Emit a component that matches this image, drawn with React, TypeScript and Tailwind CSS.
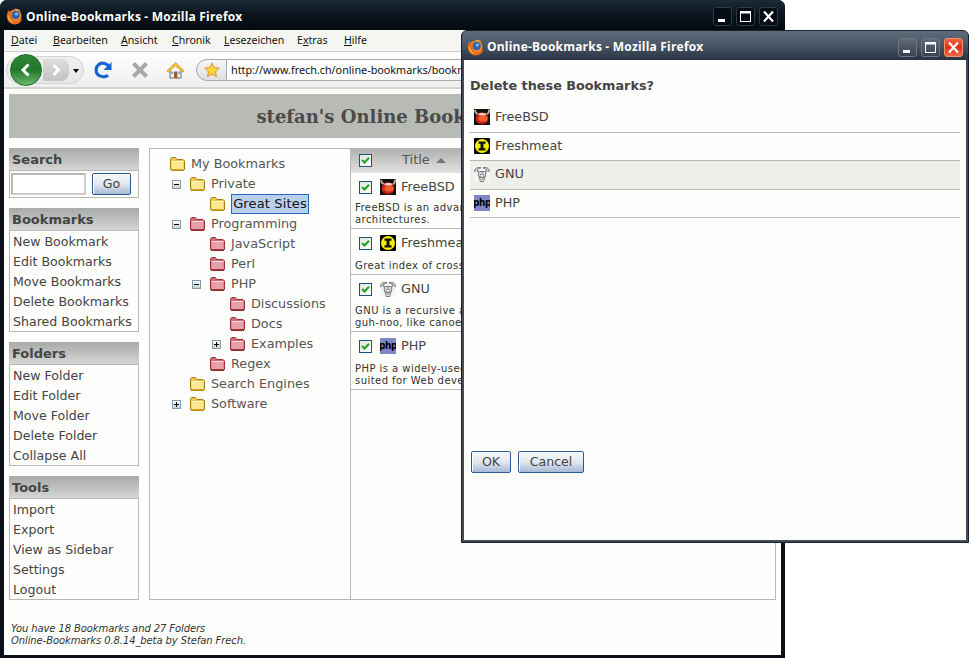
import React from "react";

const vera = { fontFamily: '"DejaVu Sans", sans-serif' };

function Firefox() {
  return (
    <svg width="17" height="17" viewBox="0 0 17 17" className="shrink-0">
      <circle cx="9" cy="8" r="6.6" fill="#f08a1c" />
      <circle cx="9.6" cy="7" r="4.2" fill="#2a62b0" />
      <circle cx="10.4" cy="6" r="1.8" fill="#7db2e2" />
      <path d="M2.6 1.8C1.6 4 .8 6 .8 8.6c0 4.4 3.6 7.8 8 7.8 3.8 0 7-2.6 7.6-6.2-1.2 2-3.2 3.2-5.6 3.2-3 0-5.2-1.8-5.2-4.4 0-1 .5-1.9 1.4-2.4-.8-.8-2-.8-2.8-.2-.2-1.6-.8-3-1.6-4.6z" fill="#e8651a" />
      <path d="M3.2 6.5c-.7 3.2 1.5 7.4 5.8 8.4-3.2.5-6.6-2.2-6.8-5.6 0-1 .4-2 1-2.8z" fill="#f9c544" />
      <path d="M8.2 1c2.4-.6 5.4.4 6.8 2.6-1.8-1.2-3.6-1.4-5-1z" fill="#f6b030" />
    </svg>
  );
}

function WinButton({ kind, variant }: { kind: "min" | "max" | "close"; variant: "dark" | "gray" | "red" }) {
  const cls =
    variant === "dark"
      ? "border-[#2c3a4c] bg-[#050b14]"
      : variant === "gray"
      ? "border-[#6d7680] bg-gradient-to-b from-[#626c78] to-[#38424f]"
      : "border-[#f09070] bg-gradient-to-b from-[#f0603c] via-[#e82c10] to-[#f06a48]";
  return (
    <div className={`w-[19px] h-[19px] rounded-[3px] border flex items-center justify-center ${cls}`}>
      <svg width="15" height="15" viewBox="0 0 15 15">
        {kind === "min" && <rect x="3" y="10" width="7" height="3" fill="#fff" />}
        {kind === "max" && (
          <g fill="none" stroke="#fff">
            <rect x="2.5" y="2.5" width="10" height="10" />
            <path d="M2 3.5h11" strokeWidth="2" />
          </g>
        )}
        {kind === "close" && <path d="M3 2.5l9 10M12 2.5l-9 10" stroke="#fff" strokeWidth="2.2" fill="none" />}
      </svg>
    </div>
  );
}

function Folder({ color }: { color: "yellow" | "red" }) {
  const c =
    color === "yellow"
      ? { s: "#a87c10", f: "#fde793", b: "#f1c548", t: "#fff6c8", d: "#c8920e" }
      : { s: "#9c3034", f: "#e8a0a8", b: "#d06a74", t: "#f9dcde", d: "#8e2428" };
  return (
    <svg width="17" height="16" viewBox="0 0 17 16" className="shrink-0">
      <path d="M1.5 4.5V3l1.2-1.5h3.6L8 3.5h6l1.5 1.5v8.5l-1 1h-12l-1-1z" fill={c.b} stroke={c.s} strokeLinejoin="round" />
      <path d="M2.5 6h12v7.5h-12z" fill={c.f} />
      <path d="M2.5 5.5h12" stroke={c.t} />
      <path d="M2 14h13" stroke={c.d} strokeWidth="1.6" />
    </svg>
  );
}

function Expander({ open }: { open: boolean }) {
  return (
    <span className="w-[9px] h-[9px] border border-[#7e9db9] bg-gradient-to-b from-white to-[#d0d0c4] flex items-center justify-center">
      <svg width="7" height="7" viewBox="0 0 7 7">
        <path d={open ? "M1 3.5h5" : "M1 3.5h5M3.5 1v5"} stroke="#000" fill="none" />
      </svg>
    </span>
  );
}

function Check() {
  return (
    <span className="w-[13px] h-[13px] border border-[#1c5180] bg-gradient-to-br from-[#e4e4dc] to-white flex items-center justify-center shrink-0">
      <svg width="11" height="11" viewBox="0 0 11 11">
        <path d="M2 5l2.5 2.5L9 2.8" stroke="#21a121" strokeWidth="2" fill="none" />
      </svg>
    </span>
  );
}

function FreeBsd() {
  return (
    <svg width="16" height="16" viewBox="0 0 16 16" className="shrink-0">
      <rect width="16" height="16" fill="#111" />
      <path d="M1 1c.3 2.4 1.2 3.6 2.8 4.2M15 .5c.2 2.6-.6 4-2.2 4.6" stroke="#d9a8a0" strokeWidth="1.8" fill="none" />
      <circle cx="8" cy="9.4" r="6.2" fill="#d0281c" />
      <ellipse cx="9" cy="9.4" rx="4.4" ry="3" fill="#f0602a" />
      <ellipse cx="8.4" cy="5.2" rx="4" ry="1.2" fill="#f6d0c8" />
      <path d="M4 13.5c2 1.6 6 1.6 8 0" stroke="#901410" fill="none" />
    </svg>
  );
}

function Freshmeat() {
  return (
    <svg width="16" height="16" viewBox="0 0 16 16" className="shrink-0">
      <rect width="16" height="16" rx="1" fill="#000" />
      <circle cx="8" cy="8" r="7" fill="#f6f000" />
      <path d="M4.5 3.5h7v2.2h-2v4.6h2v2.2h-7v-2.2h2V5.7h-2z" fill="#111" />
    </svg>
  );
}

function Gnu() {
  return (
    <svg width="16" height="16" viewBox="0 0 16 16" className="shrink-0">
      <rect width="16" height="16" fill="#f4f4f2" />
      <path d="M.8 6C.2 2.4 3.6.8 7 1.8 5 2.4 3.4 3 3.4 5L6 6.4M15.2 6c.6-3.6-2.8-5.2-6.2-4.2 2 .6 3.6 1.2 3.6 3.2L10 6.4" stroke="#6c6c6c" fill="#cfcfcf" strokeWidth="1" />
      <path d="M4.2 6.5c1-1.4 6.6-1.4 7.6 0 .2 3.2-1.6 6.4-2.2 9H6.4c-.6-2.6-2.4-5.8-2.2-9z" fill="#f2f2f2" stroke="#777" />
      <path d="M5.6 8l1.4 1M10.4 8L9 9M6 11l4 .4M6.6 13h2.8M8 6v3M6 9.6v2M10 9.6v2" stroke="#666" fill="none" />
    </svg>
  );
}

function Php() {
  return (
    <span
      className="w-[16px] h-[16px] bg-[#8286c2] flex items-center justify-center shrink-0 text-[10px] font-bold text-black leading-none overflow-hidden tracking-[-0.5px]"
      style={{ fontFamily: '"DejaVu Sans Condensed", "Liberation Sans", sans-serif' }}
    >
      php
    </span>
  );
}

const icons = { freebsd: FreeBsd, freshmeat: Freshmeat, gnu: Gnu, php: Php };

function SidePanel({ title, items }: { title: string; items: string[] }) {
  return (
    <div className="flex flex-col">
      <div className="h-[22px] pl-[3px] pt-[1px] bg-gradient-to-b from-[#a8aaa7] to-[#d6d7d4] text-[13px] font-bold text-[#444] leading-[22px]">{title}</div>
      <div className="border border-[#b8b8b6] flex flex-col pl-[2px] pt-[1px] h-[102px] text-[#444] text-[12.6px]">
        {items.map((t) => (
          <div key={t} className="h-[20px] leading-[20px] pl-[1px]">{t}</div>
        ))}
      </div>
    </div>
  );
}

type Node = { t: string; lvl: 0 | 1 | 2 | 3; c: "yellow" | "red"; exp?: "open" | "closed"; sel?: boolean };
const tree: Node[] = [
  { t: "My Bookmarks", lvl: 0, c: "yellow" },
  { t: "Private", lvl: 1, c: "yellow", exp: "open" },
  { t: "Great Sites", lvl: 2, c: "yellow", sel: true },
  { t: "Programming", lvl: 1, c: "red", exp: "open" },
  { t: "JavaScript", lvl: 2, c: "red" },
  { t: "Perl", lvl: 2, c: "red" },
  { t: "PHP", lvl: 2, c: "red", exp: "open" },
  { t: "Discussions", lvl: 3, c: "red" },
  { t: "Docs", lvl: 3, c: "red" },
  { t: "Examples", lvl: 3, c: "red", exp: "closed" },
  { t: "Regex", lvl: 2, c: "red" },
  { t: "Search Engines", lvl: 1, c: "yellow" },
  { t: "Software", lvl: 1, c: "yellow", exp: "closed" },
];
const indent = { 0: "pl-[19px]", 1: "pl-[22px]", 2: "pl-[42px]", 3: "pl-[62px]" };

function TreeRow({ n }: { n: Node }) {
  return (
    <div className={`h-[20px] flex items-center ${indent[n.lvl]}`}>
      {n.lvl > 0 && (
        <span className="w-[17px] flex items-center shrink-0">{n.exp && <Expander open={n.exp === "open"} />}</span>
      )}
      <Folder color={n.c} />
      {n.sel ? (
        <span className="ml-[5px] h-[20px] w-[78px] text-center border border-[#2f63c8] bg-[#b9cfee] text-[#111] leading-[18px] text-[13px] tracking-[0.15px]">{n.t}</span>
      ) : (
        <span className="ml-[5px] text-[#555]">{n.t}</span>
      )}
    </div>
  );
}

const bookmarks = [
  { id: "freebsd" as const, t: "FreeBSD", h: "h-[56px]", dm: "mt-[3px]", d: ["FreeBSD is an advanced operating system for x86 compatible", "architectures."] },
  { id: "freshmeat" as const, t: "Freshmeat", h: "h-[46px]", dm: "mt-[5px]", d: ["Great index of cross-platform software"] },
  { id: "gnu" as const, t: "GNU", h: "h-[57px]", dm: "mt-[4px]", d: ["GNU is a recursive acronym for GNU's Not Unix; pronounced", "guh-noo, like canoe."] },
  { id: "php" as const, t: "PHP", h: "h-[58px]", dm: "mt-[5px]", d: ["PHP is a widely-used general-purpose scripting language", "suited for Web development."] },
];

function BmRow({ b }: { b: (typeof bookmarks)[number] }) {
  const I = icons[b.id];
  return (
    <div className={`${b.h} border-b border-[#b8b8b6] overflow-hidden`}>
      <div className="h-[24px] mt-[2px] flex items-center pl-[8px]">
        <Check />
        <span className="ml-[8px]"><I /></span>
        <span className="ml-[5px] text-[12.8px] text-[#444]">{b.t}</span>
      </div>
      <div className={`${b.dm} pl-[4px] text-[10px] leading-[12px] tracking-[0.45px] text-[#333] whitespace-nowrap`}>
        {b.d.map((l) => (
          <div key={l}>{l}</div>
        ))}
      </div>
    </div>
  );
}

function Btn({ label, w }: { label: string; w: string }) {
  return (
    <button
      className={`${w} h-[22px] pt-[1px] rounded-[2px] border border-[#2f5a96] bg-gradient-to-b from-[#f8f9fb] via-[#e2e8f0] to-[#a6b9d6] text-[12.6px] text-[#444] shadow-[inset_1px_1px_0_#fff]`}
      style={vera}
    >
      {label}
    </button>
  );
}

function Menu() {
  const u = "underline underline-offset-1";
  return (
    <div className="h-[21px] bg-[#f5f5f1] flex items-center pl-[7px] text-[10.6px] text-[#111]" style={{ fontFamily: '"Noto Sans", sans-serif' }}>
      <span className="w-[42px]"><span className={u}>D</span>atei</span>
      <span className="w-[68px]"><span className={u}>B</span>earbeiten</span>
      <span className="w-[51px]"><span className={u}>A</span>nsicht</span>
      <span className="w-[52px]"><span className={u}>C</span>hronik</span>
      <span className="w-[73px]"><span className={u}>L</span>esezeichen</span>
      <span className="w-[47px]">E<span className={u}>x</span>tras</span>
      <span><span className={u}>H</span>ilfe</span>
    </div>
  );
}

function Toolbar() {
  return (
    <div className="h-[38px] bg-gradient-to-b from-white to-[#eeeeee] border-t border-[#d0d0cc] border-b-2 border-b-[#d4d4d0] flex items-center pl-[2px] overflow-hidden">
      <div className="relative w-[78px] h-[28px] rounded-full border border-[#d0d2d4] bg-gradient-to-b from-[#eceef0] to-[#e6e8ea] shrink-0">
        <div className="absolute left-[36px] top-[2px] w-[26px] h-[22px] rounded-r-[8px] bg-gradient-to-b from-[#dcdcdc] to-[#c4c4c4] flex items-center justify-center">
          <svg width="12" height="14" viewBox="0 0 12 14"><path d="M3.5 2l5 5-5 5" stroke="#fff" strokeWidth="3" fill="none" /></svg>
        </div>
        <div className="absolute left-[3px] -top-[3px] w-[32px] h-[32px] rounded-full border border-[#1f6a26] bg-gradient-to-b from-[#2f8636] via-[#1f7a2a] to-[#6ab86c] flex items-center justify-center">
          <svg width="16" height="16" viewBox="0 0 16 16"><path d="M10.5 2.5L5 8l5.5 5.5" stroke="#fff" strokeWidth="3" fill="none" /></svg>
        </div>
        <div className="absolute left-[66px] top-[12px] w-0 h-0 border-x-[3px] border-x-transparent border-t-[4px] border-t-black" />
      </div>
      <svg width="18" height="18" viewBox="0 0 18 18" className="ml-[10px] shrink-0">
        <path d="M15 6C13.6 2.6 8.5 1 5 3.4 1.6 5.8 1.4 10.6 3.5 13.2c2.5 3 7.5 3.4 10.5 1" stroke="#1464d8" strokeWidth="3.2" fill="none" />
        <path d="M17.5 1v8h-8z" fill="#1464d8" />
      </svg>
      <svg width="18" height="18" viewBox="0 0 18 18" className="ml-[19px] shrink-0">
        <path d="M2.5 2.5l13 13M15.5 2.5l-13 13" stroke="#a8a8a8" strokeWidth="4" fill="none" />
      </svg>
      <svg width="19" height="18" viewBox="0 0 19 18" className="ml-[17px] shrink-0">
        <path d="M4 9v8h11V9" fill="#f8f8f0" stroke="#5a6a8a" />
        <path d="M.8 10L9.5 1.5 18.2 10l-1.6 1L9.5 4.6 2.4 11z" fill="#f6c040" stroke="#d89a20" strokeWidth=".8" />
        <rect x="8" y="10.5" width="3.4" height="6.5" fill="#a85a20" />
        <rect x="5" y="10.5" width="2.2" height="2.6" fill="#80a8d8" />
        <rect x="12.2" y="10.5" width="2.2" height="2.6" fill="#80a8d8" />
      </svg>
      <div className="ml-[11px] flex-1 h-[22px] flex min-w-0">
        <div className="w-[31px] h-[22px] rounded-l-full border border-[#a8a8a8] bg-gradient-to-b from-[#f6f6f6] to-[#e0e0e0] flex items-center justify-center shrink-0">
          <svg width="16" height="16" viewBox="0 0 16 16">
            <path d="M8 1l2.2 4.6 5 .6-3.7 3.4 1 5L8 11.9l-4.5 2.7 1-5L.8 6.2l5-.6z" fill="#fbd83c" stroke="#e88a28" />
          </svg>
        </div>
        <div className="flex-1 border border-[#a8a8a8] border-l-0 bg-white pl-[4px] text-[10.8px] leading-[20px] text-[#111] whitespace-nowrap overflow-hidden" style={{ fontFamily: '"Noto Sans", sans-serif' }}>
          http://www.frech.ch/online-bookmarks/bookmarks.php
        </div>
      </div>
    </div>
  );
}

const dialogItems = [
  { id: "freebsd" as const, t: "FreeBSD", cls: "h-[30px] bg-transparent" },
  { id: "freshmeat" as const, t: "Freshmeat", cls: "h-[28px] bg-transparent" },
  { id: "gnu" as const, t: "GNU", cls: "h-[29px] bg-[#eeeeea]" },
  { id: "php" as const, t: "PHP", cls: "h-[28px] bg-transparent" },
];

export default function App() {
  return (
    <div className="relative w-[969px] h-[658px] overflow-hidden bg-white" style={vera}>
      {/* Main window */}
      <div className="absolute left-0 top-0 w-[785px] h-[658px] flex flex-col rounded-t-[7px] bg-[#0a1119] overflow-hidden">
        <div className="h-[30px] shrink-0 flex items-center pl-[6px] pt-[3px] bg-gradient-to-b from-[#1a2a38] via-[#0b141d] to-[#050a10]">
          <Firefox />
          <span className="ml-[3px] text-white text-[12px] font-bold tracking-[0.2px]" style={{ fontFamily: '"Open Sans", sans-serif' }}>
            Online-Bookmarks - Mozilla Firefox
          </span>
          <div className="ml-auto mr-[7px] flex gap-[4px]">
            <WinButton kind="min" variant="dark" />
            <WinButton kind="max" variant="dark" />
            <WinButton kind="close" variant="dark" />
          </div>
        </div>
        <div className="flex-1 flex flex-col mx-[4px] mb-[3px] min-h-0 bg-[#fefefc] overflow-hidden">
          <Menu />
          <Toolbar />
          <div className="flex-1 flex flex-col px-[5px] pt-[5px] min-h-0">
            <div className="h-[44px] shrink-0 bg-[#b8bab6] flex items-center justify-center text-[18px] font-bold text-[#4a4a4a]" style={{ fontFamily: '"DejaVu Serif", serif' }}>
              stefan's Online Bookmarks
            </div>
            <div className="mt-[10px] h-[452px] shrink-0 flex gap-[10px]">
              <div className="w-[130px] shrink-0 flex flex-col gap-[10px]">
                <div className="flex flex-col">
                  <div className="h-[22px] pl-[3px] pt-[1px] bg-gradient-to-b from-[#a8aaa7] to-[#d6d7d4] text-[13px] font-bold text-[#444] leading-[22px]">Search</div>
                  <div className="h-[28px] border border-[#b8b8b6] flex items-center pl-[1px] gap-[6px]">
                    <div className="w-[75px] h-[22px] border-2 border-[#b8b8b6] border-b-[#ccc] border-r-[#ccc] bg-white" />
                    <Btn label="Go" w="w-[39px]" />
                  </div>
                </div>
                <SidePanel title="Bookmarks" items={["New Bookmark", "Edit Bookmarks", "Move Bookmarks", "Delete Bookmarks", "Shared Bookmarks"]} />
                <SidePanel title="Folders" items={["New Folder", "Edit Folder", "Move Folder", "Delete Folder", "Collapse All"]} />
                <SidePanel title="Tools" items={["Import", "Export", "View as Sidebar", "Settings", "Logout"]} />
              </div>
              <div className="flex-1 flex border border-[#b8b8b6] min-w-0">
                <div className="w-[201px] shrink-0 border-r border-[#b8b8b6] pt-[5px] text-[12.8px]">
                  {tree.map((n) => (
                    <TreeRow key={n.t} n={n} />
                  ))}
                </div>
                <div className="flex-1 min-w-0 overflow-hidden">
                  <div className="h-[24px] pb-[1px] flex items-center pl-[8px] bg-gradient-to-b from-[#b0b2af] to-[#e4e4e2] text-[13px] text-[#555]">
                    <Check />
                    <span className="ml-[30px] pb-[2px]">Title</span>
                    <span className="ml-[6px] w-0 h-0 border-x-[5px] border-x-transparent border-b-[5px] border-b-[#777]" />
                  </div>
                  {bookmarks.map((b) => (
                    <BmRow key={b.id} b={b} />
                  ))}
                </div>
              </div>
            </div>
            <div className="mt-[23px] text-[10px] leading-[12px] italic text-[#333] pl-[2px] tracking-[-0.1px]">
              <div>You have 18 Bookmarks and 27 Folders</div>
              <div>Online-Bookmarks 0.8.14_beta by Stefan Frech.</div>
            </div>
          </div>
        </div>
      </div>

      {/* Dialog window */}
      <div className="absolute left-[461px] top-[30px] w-[508px] h-[513px] flex flex-col rounded-t-[6px] bg-[#454d59] border border-[#18202c] overflow-hidden">
        <div className="h-[29px] shrink-0 flex items-center pl-[5px] pt-[3px] bg-gradient-to-b from-[#5f6b79] via-[#4a5665] to-[#283443]">
          <Firefox />
          <span className="ml-[3px] text-white text-[12px] font-bold tracking-[0.2px]" style={{ fontFamily: '"Open Sans", sans-serif' }}>
            Online-Bookmarks - Mozilla Firefox
          </span>
          <div className="ml-auto mr-[5px] flex gap-[4px]">
            <WinButton kind="min" variant="gray" />
            <WinButton kind="max" variant="gray" />
            <WinButton kind="close" variant="red" />
          </div>
        </div>
        <div className="flex-1 mx-[2px] mb-[2px] bg-[#fefefc] flex flex-col px-[6px] min-h-0">
          <div className="h-[43px] shrink-0 pt-[17px] text-[12.8px] font-bold leading-[18px] text-[#444]">Delete these Bookmarks?</div>
          {dialogItems.map((d) => {
            const I = icons[d.id];
            return (
              <div key={d.id} className={`${d.cls} shrink-0 border-b border-[#b8b8b6] flex items-center pl-[4px] pb-[2px] text-[12.8px] text-[#444]`}>
                <I />
                <span className="ml-[5px]">{d.t}</span>
              </div>
            );
          })}
          <div className="mt-[233px] flex gap-[7px] pl-[1px]">
            <Btn label="OK" w="w-[40px]" />
            <Btn label="Cancel" w="w-[66px]" />
          </div>
        </div>
      </div>
    </div>
  );
}
